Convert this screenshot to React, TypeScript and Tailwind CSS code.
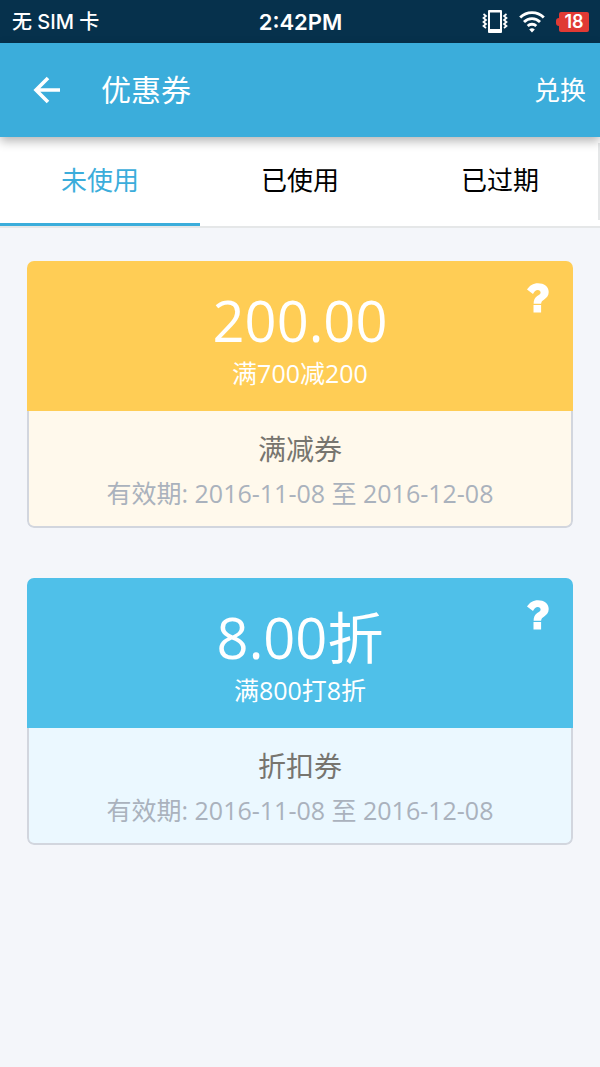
import { useState } from "react";
import clsx from "clsx";

type Coupon = {
  id: number;
  amount: string;
  condition: string;
  name: string;
  period: string;
  tone: "yellow" | "blue";
};

const tabs = ["未使用", "已使用", "已过期"];

const coupons: Coupon[] = [
  {
    id: 1,
    amount: "200.00",
    condition: "满700减200",
    name: "满减券",
    period: "有效期: 2016-11-08 至 2016-12-08",
    tone: "yellow",
  },
  {
    id: 2,
    amount: "8.00折",
    condition: "满800打8折",
    name: "折扣券",
    period: "有效期: 2016-11-08 至 2016-12-08",
    tone: "blue",
  },
];

function VibrateIcon() {
  return (
    <svg width="26" height="26" viewBox="0 0 26 26" fill="none" stroke="white">
      <path
        fill="white"
        stroke="none"
        fillRule="evenodd"
        d="M7 1h12a1 1 0 0 1 1 1v21a1 1 0 0 1-1 1H7a1 1 0 0 1-1-1V2a1 1 0 0 1 1-1zM8 3.500v16.500h10V3.500z"
      />
      <path
        strokeWidth="1.700"
        d="M1.500 5l2.500 2-2.500 2 2.500 2-2.500 2 2.500 2-2.500 2 2.500 2M24.500 5l-2.500 2 2.500 2-2.500 2 2.500 2-2.500 2 2.500 2-2.500 2"
      />
    </svg>
  );
}

function WifiIcon() {
  return (
    <svg width="26" height="22" viewBox="0 0 26 22" fill="none" stroke="white" strokeWidth="2.800">
      <path d="M1.200 6.500a16.500 16.500 0 0 1 23.600 0" />
      <path d="M5 10.900a11.200 11.200 0 0 1 16 0" />
      <path d="M8.700 15a6.100 6.100 0 0 1 8.600 0" />
      <path fill="white" stroke="none" d="M13 21.500l-2.800-3a4 4 0 0 1 5.600 0z" />
    </svg>
  );
}

function StatusBar() {
  return (
    <div className="grid h-[43px] grid-cols-3 items-center bg-[#06314c] pr-[11px] pl-3 font-[Inter,'Noto_Sans_CJK_SC',sans-serif] text-white">
      <span className="text-[20px] leading-6 font-medium">无 SIM 卡</span>
      <span className="text-center text-[22px] leading-6 font-semibold">2:42PM</span>
      <div className="flex items-center justify-end gap-[11px]">
        <VibrateIcon />
        <WifiIcon />
        <div className="flex items-center">
          <span className="h-2 w-[3px] rounded-l-sm bg-[#e03a34]" />
          <span className="h-5 w-[30px] rounded-xs bg-[#e03a34] text-center text-[18px] leading-5 font-semibold">
            18
          </span>
        </div>
      </div>
    </div>
  );
}

function Header() {
  return (
    <header className="relative z-10 flex h-[94px] items-center bg-[#3baddb] pr-[14px] pl-[33px] text-white shadow-[0_4px_10px_rgba(0,0,0,0.3)]">
      <button type="button" aria-label="返回">
        <svg width="28" height="28" viewBox="0 0 28 28" fill="none" stroke="white" strokeWidth="3.600">
          <path d="M27 14H3M15 2L3 14l12 12" />
        </svg>
      </button>
      <h1 className="ml-10 text-[30px] leading-10">优惠券</h1>
      <button type="button" className="ml-auto text-[26px] leading-10">
        兑换
      </button>
    </header>
  );
}

function CouponCard({ coupon }: { coupon: Coupon }) {
  const yellow = coupon.tone === "yellow";

  return (
    <article className="overflow-hidden rounded-[7px] text-center">
      <div
        className={clsx(
          "relative h-[150px] pt-[22px] text-white",
          yellow ? "bg-[#ffcd55]" : "bg-[#4fc0e9]",
        )}
      >
        <p className="text-[56px] leading-[74px]">{coupon.amount}</p>
        <p className="text-[25px] leading-8">{coupon.condition}</p>
        <button type="button" aria-label="使用说明" className="absolute top-[22px] right-6">
          <svg width="22" height="30" viewBox="0 0 22 30" fill="white">
            <path d="M0 6.500C2.500 2.500 6 .2 11 .2c6 0 10.700 3.300 10.700 8.800 0 3.500-2 5.800-4.500 7.400-2 1.300-2.900 2.200-3.100 4.400H6.600c0-4 1.200-6.400 4-8.100 1.900-1.100 3-1.900 3-3.200 0-1.500-1.200-2.400-2.800-2.400-2 0-3.400 1.400-4.800 3.900z" />
            <path d="M6.500 22h7.600v7.500H6.500z" />
          </svg>
        </button>
      </div>
      <div
        className={clsx(
          "h-[117px] rounded-b-[7px] border-2 border-t-0 border-[#d2d6de] pt-4",
          yellow ? "bg-[#fff9ec]" : "bg-[#ebf8ff]",
        )}
      >
        <h2 className="text-[28px] leading-11 text-[#77756f]">{coupon.name}</h2>
        <p className="text-[25px] leading-11 text-[#aab2bd]">{coupon.period}</p>
      </div>
    </article>
  );
}

export default function App() {
  const [active, setActive] = useState(0);

  return (
    <div className="min-h-screen bg-[#f4f6fa] font-['Open_Sans','Noto_Sans_CJK_SC',sans-serif]">
      <StatusBar />
      <Header />
      <nav className="flex h-[91px] border-b-2 border-[#e5e7e8] bg-white">
        {tabs.map((tab, i) => (
          <button
            key={tab}
            type="button"
            onClick={() => setActive(i)}
            className={clsx(
              "flex-1 border-b-3 text-[26px] leading-10",
              active === i ? "border-[#3baddb] text-[#3baddb]" : "border-transparent text-black",
            )}
          >
            {tab}
          </button>
        ))}
        <span className="-ml-0.5 mt-1.5 mb-1.5 w-0.5 bg-[#e5e7e8]" />
      </nav>
      <main className="flex flex-col gap-[50px] px-[27px] py-[33px]">
        {coupons.map((coupon) => (
          <CouponCard key={coupon.id} coupon={coupon} />
        ))}
      </main>
    </div>
  );
}
